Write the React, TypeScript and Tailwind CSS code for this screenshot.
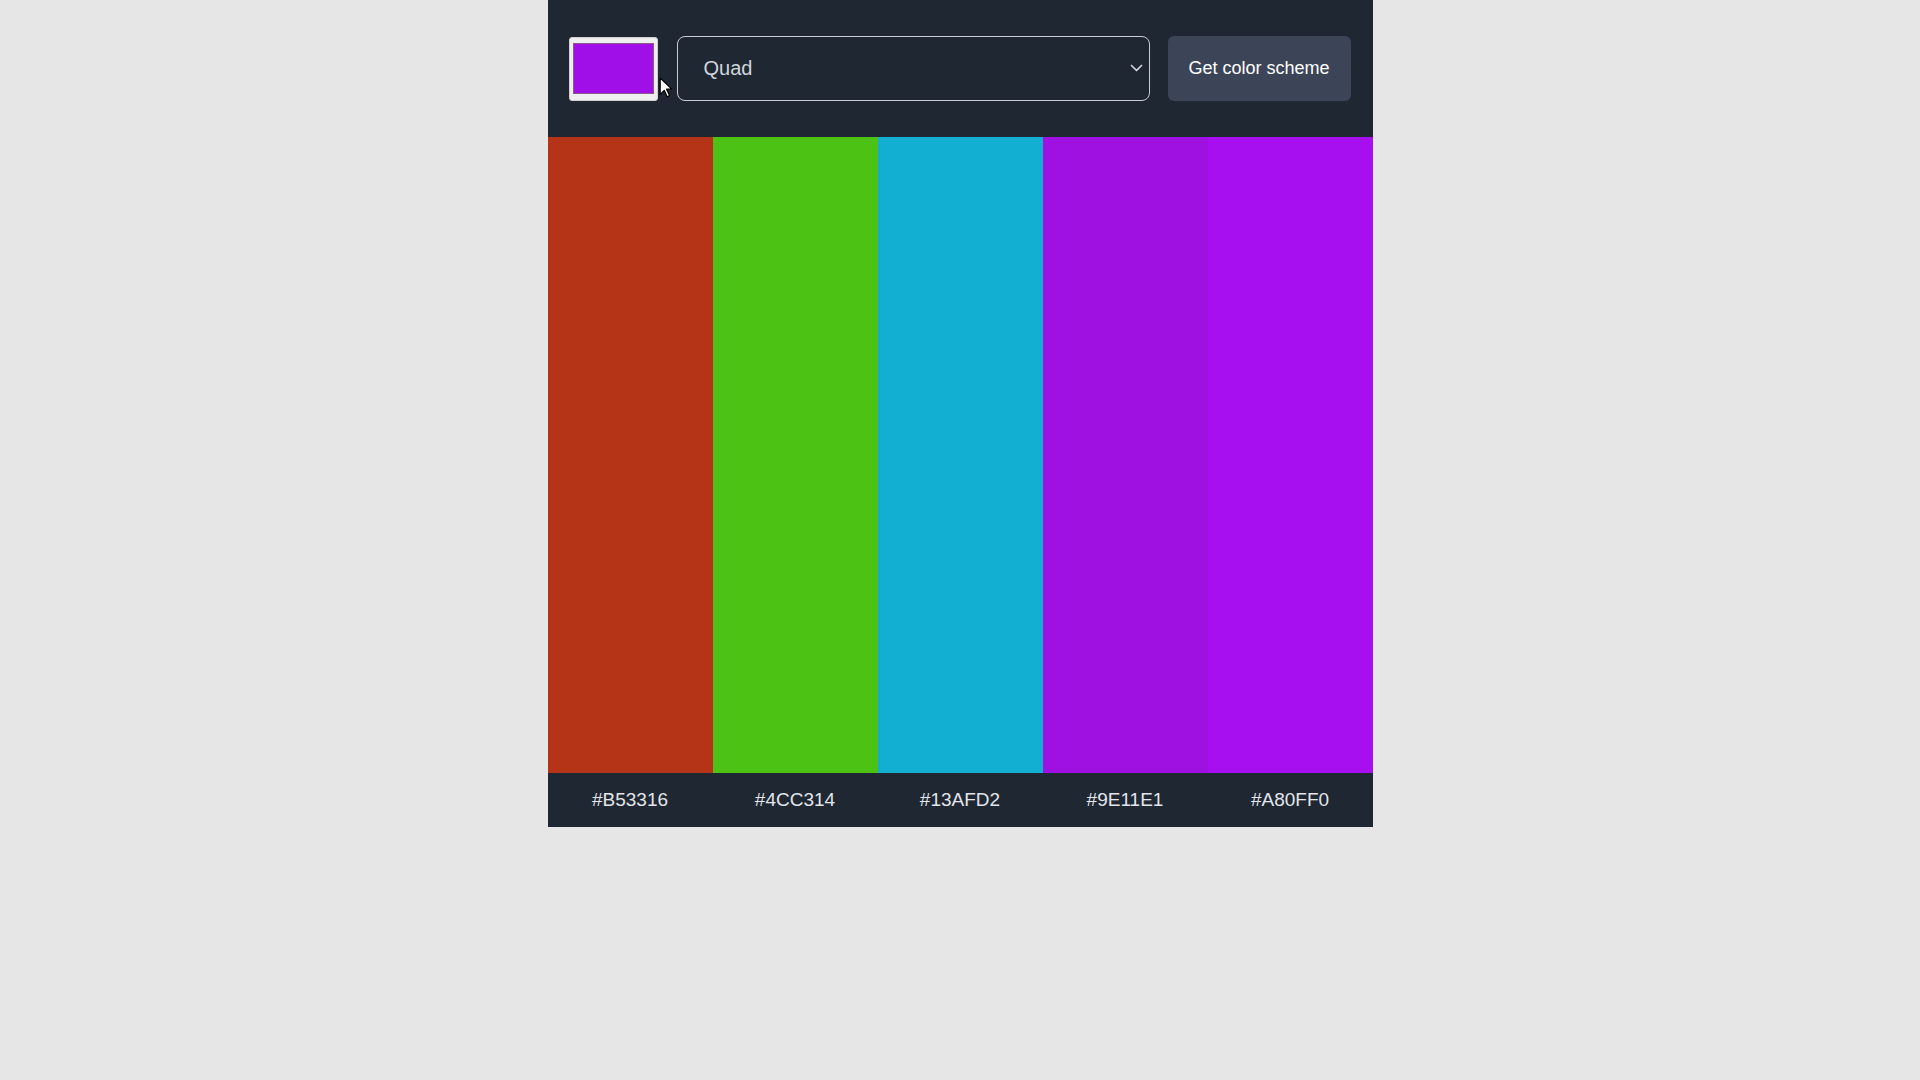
import React from "react";

const colors = ["#B53316", "#4CC314", "#13AFD2", "#9E11E1", "#A80FF0"];

export default function App() {
  return (
    <div
      className="min-h-screen w-full bg-[#e6e6e6]"
      style={{ fontFamily: '"Liberation Sans", Arial, sans-serif' }}
    >
      <div className="mx-auto w-[825px] bg-[#1f2733]">
        <div className="relative flex h-[137px] items-center pl-[21px]">
          <div className="flex h-[64px] w-[89px] flex-col rounded-[3px] border border-[#d0d0d0] bg-[#efefef] px-[3px] pb-[6px] pt-[5px]">
            <div className="flex-1 border border-[#8a5a8a] bg-[#A10FE8]" />
          </div>
          <div className="ml-[19px] flex h-[65px] w-[473px] items-center justify-between rounded-lg border border-[#c9ccd2] pl-[26px] pr-[6px] text-[20px] text-[#d1d5db]">
            <span className="-mt-[2px]">Quad</span>
            <svg width="13" height="9" viewBox="0 0 13 9" fill="none">
              <path d="M1.5 1.5L6.5 6.5L11.5 1.5" stroke="#d1d5db" strokeWidth="1.7" strokeLinecap="round" strokeLinejoin="round" />
            </svg>
          </div>
          <button className="ml-[18px] flex h-[65px] w-[183px] items-center justify-center rounded-md bg-[#3c4557] text-[18px] text-white">
            Get color scheme
          </button>
          <svg
            className="absolute left-[111px] top-[77px]"
            width="14"
            height="22"
            viewBox="0 0 12 19"
          >
            <path d="M1 1L1 15L4.5 11.5L7 17L9 16L6.5 10.5L11 10.5Z" fill="#fff" stroke="#000" strokeWidth="1" strokeLinejoin="round" />
          </svg>
        </div>
        <div className="grid h-[636px] grid-cols-5">
          {colors.map((c) => (
            <div key={c} style={{ backgroundColor: c }} />
          ))}
        </div>
        <div className="grid h-[54px] grid-cols-5 items-center">
          {colors.map((c) => (
            <div key={c} className="text-center text-[19px] text-[#e2e5ea]">
              {c}
            </div>
          ))}
        </div>
      </div>
    </div>
  );
}
